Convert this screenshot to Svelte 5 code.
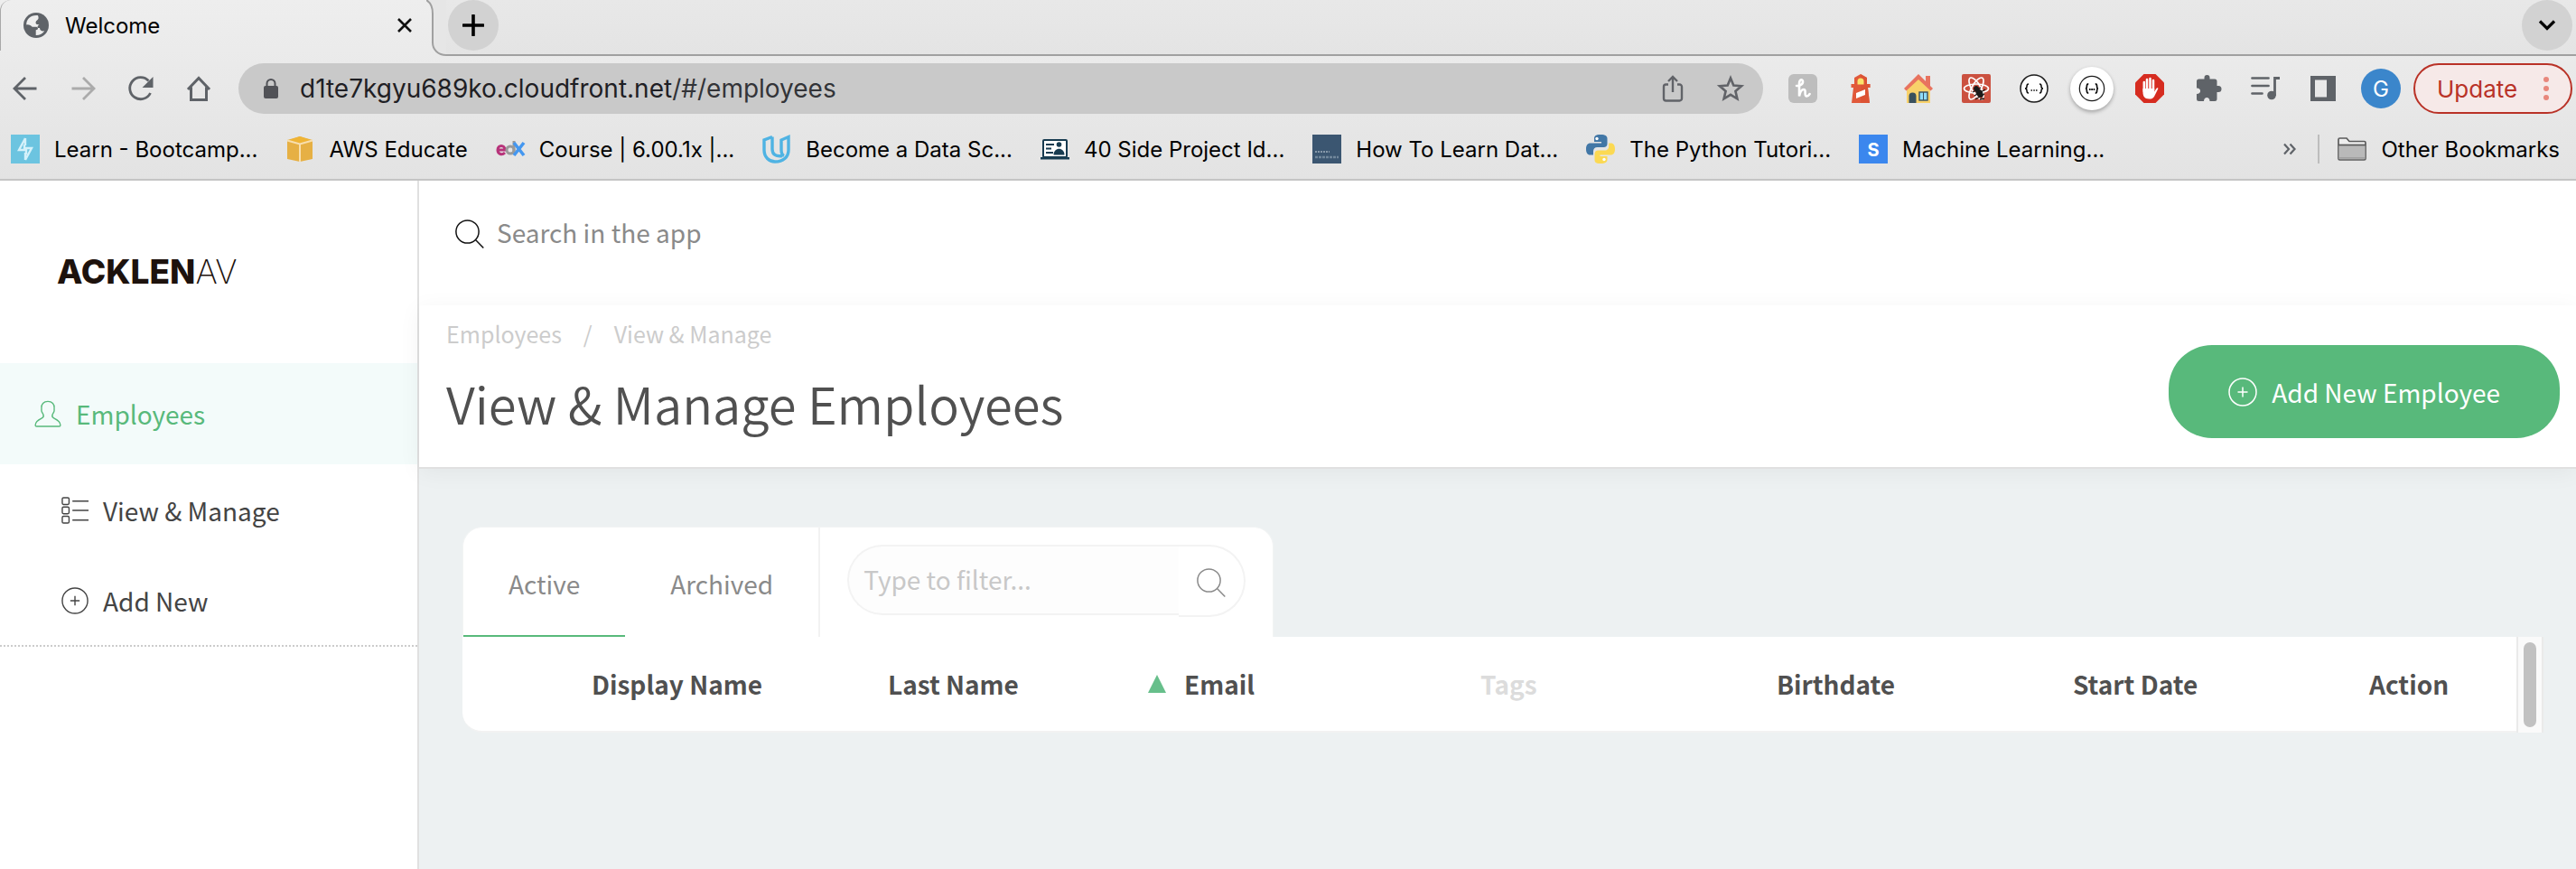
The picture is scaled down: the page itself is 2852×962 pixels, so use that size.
<script>
  const bookmarks = [
    { icon: 'learn', label: 'Learn - Bootcamp...' },
    { icon: 'aws', label: 'AWS Educate' },
    { icon: 'edx', label: 'Course | 6.00.1x |...' },
    { icon: 'udacity', label: 'Become a Data Sc...' },
    { icon: 'project', label: '40 Side Project Id...' },
    { icon: 'data', label: 'How To Learn Dat...' },
    { icon: 'python', label: 'The Python Tutori...' },
    { icon: 'ml', label: 'Machine Learning...' }
  ];
  const columns = [
    { label: 'Display Name' },
    { label: 'Last Name' },
    { label: 'Email', sorted: true },
    { label: 'Tags', muted: true },
    { label: 'Birthdate' },
    { label: 'Start Date' },
    { label: 'Action' }
  ];
  let tab = $state('Active');
</script>

{#snippet plusCircle()}
  <svg class="icon" viewBox="0 0 32 32" aria-hidden="true">
    <circle cx="16" cy="16" r="15" /><path d="M16 10.5v11M10.5 16h11" />
  </svg>
{/snippet}

{#snippet magnifier()}
  <svg class="icon" viewBox="0 0 32 32" aria-hidden="true">
    <circle cx="13.5" cy="13.5" r="12.6" /><path d="M22.5 22.5L31.3 31.5" />
  </svg>
{/snippet}

<div class="page">
  <header class="browser">
    <div class="tabstrip">
      <div class="tab">
        <svg class="globe" viewBox="0 0 28 28" aria-hidden="true">
          <circle cx="14" cy="14" r="14" fill="#5f6368" />
          <path d="M3.200 13.500c2.800-.6 5 .7 6.500 2.300h4.600c1 0 1.700.8 1.700 1.700 0 1.200-1 1.700-2.300 1.700v5.900c4 .2 7.500-1.800 9.500-4.800-2.800.6-5.200-.6-5.200-3.200h-2.600c0-1.800.6-3.100 2.100-3.600-1.600-.5-3.900-.2-3.900-2.200 0-2.700 2.200-2.500 2.900-4.700.3-1.100 0-2.500-.7-3.500C8 2.400 3.200 7 3.200 13.500z" fill="#eee" />
        </svg>
        <span class="tab-title">Welcome</span>
        <button class="bare" aria-label="Close tab">
          <svg width="16" height="16" viewBox="0 0 16 16"><path d="M1 1l14 14M15 1L1 15" stroke="#111" stroke-width="2.600" /></svg>
        </button>
      </div>
      <svg class="tab-edge" viewBox="0 0 22 62" aria-hidden="true">
        <path d="M0 0C5 3 7 8 7 15V47C7 55 13 61 22 61V0z" fill="#e6e6e6" />
        <path d="M0 0C5 3 7 8 7 15V47C7 55 13 61 22 61" fill="none" stroke="#a0a0a0" stroke-width="2" />
      </svg>
      <div class="strip-rest">
        <button class="round" aria-label="New tab">
          <svg width="24" height="24" viewBox="0 0 24 24"><path d="M12 1v22M1 12h22" stroke="#000" stroke-width="3.600" stroke-linecap="round" /></svg>
        </button>
        <button class="round" aria-label="Search tabs">
          <svg width="20" height="14" viewBox="0 0 20 14"><path d="M2 2.500l8 8 8-8" fill="none" stroke="#000" stroke-width="3.200" /></svg>
        </button>
      </div>
    </div>

    <div class="toolbar">
      <nav class="nav-buttons" aria-label="History">
        <button class="bare" aria-label="Back"><svg class="ic" viewBox="0 0 32 32"><path d="M28.500 16H4.500M16 4L4 16l12 12" stroke="#5f6368" stroke-width="2.800" fill="none" /></svg></button>
        <button class="bare" aria-label="Forward"><svg class="ic" viewBox="0 0 32 32"><path d="M3.500 16h24M16 4l12 12-12 12" stroke="#ababab" stroke-width="2.800" fill="none" /></svg></button>
        <button class="bare" aria-label="Reload"><svg class="ic" viewBox="0 0 32 32"><path d="M26.500 21A12 12 0 1 1 24.500 7.500" stroke="#5f6368" stroke-width="2.800" fill="none" /><path d="M29.500 3v12h-12z" fill="#5f6368" /></svg></button>
        <button class="bare" aria-label="Home"><svg class="ic" viewBox="0 0 32 32"><path d="M4 17L16 4.500 28 17M7.500 14.500v14h17v-14" stroke="#5f6368" stroke-width="3" fill="none" /></svg></button>
      </nav>
      <div class="omnibox">
        <svg width="16" height="22" viewBox="0 0 16 22" aria-hidden="true"><rect y="8" width="16" height="14" rx="2" fill="#515257" /><path d="M3.500 9V5.500a4.500 4.500 0 0 1 9 0V9" fill="none" stroke="#515257" stroke-width="2" /></svg>
        <span class="url"><span class="host">d1te7kgyu689ko.cloudfront.net</span>/#/employees</span>
        <button class="bare" aria-label="Share"><svg class="ic" viewBox="0 0 32 32"><path d="M11 11.500H8.500A2.500 2.500 0 0 0 6 14v13a2.500 2.500 0 0 0 2.500 2.500h15A2.500 2.500 0 0 0 26 27V14a2.500 2.500 0 0 0-2.500-2.500H21M16 20V3.500M11 8l5-5 5 5" fill="none" stroke="#616368" stroke-width="2.400" /></svg></button>
        <button class="bare" aria-label="Bookmark this page"><svg class="ic" viewBox="0 0 32 32"><path d="M16 4.500l3.300 8 8.700.7-6.600 5.700 2 8.400-7.400-4.500-7.400 4.500 2-8.400L4 13.200l8.700-.7z" fill="none" stroke="#616368" stroke-width="2.600" /></svg></button>
      </div>
      <div class="extensions">
        <svg class="ic" viewBox="0 0 32 32" aria-hidden="true"><rect width="32" height="32" rx="6" fill="#bdbdbd" /><path d="M9 13c4 .5 7.500-2 7-5s-4-2-4 2.500v14c1.200-5.500 3-7.500 5-7.500 3.200 0 .2 6 2.600 7.300 1.500.7 3-.8 4-2.300" fill="none" stroke="#fff" stroke-width="2.600" stroke-linecap="round" /></svg>
        <svg class="ic" viewBox="0 0 32 32" aria-hidden="true"><path d="M16 0l7 4v7h3.500v4H24l2 17H6l2-17H5.500v-4H9V4z" fill="#e1593a" /><path d="M16 0l7 4v7h3.500v4H24l2 17H16z" fill="#d95030" opacity=".6" /><path d="M12.500 11.500V8a3.500 3.500 0 0 1 7 0v3.500z" fill="#fbe36b" /><path d="M11 21l10-4v6l-10 4z" fill="#fff" /></svg>
        <svg class="ic" viewBox="0 0 32 32" aria-hidden="true"><rect x="24" y="2" width="5" height="12" fill="#e8735f" /><path d="M3 16L16 4l13 12v16H3z" fill="#f8d16a" /><path d="M0 16L16 0l16 16-2.500 2.500L16 6 2.500 18.500z" fill="#e8735f" /><path d="M5.500 32v-7.500a4 4 0 0 1 8 0V32z" fill="#39505c" /><rect x="17" y="20" width="9" height="9" fill="#8fdcf8" stroke="#39505c" stroke-width="1.400" /><path d="M21.500 20v9" stroke="#39505c" /></svg>
        <svg class="ic" viewBox="0 0 32 32" aria-hidden="true"><rect width="32" height="32" rx="2" fill="#cb5140" /><g fill="none" stroke="#fff" stroke-width="1.700"><ellipse cx="16" cy="16" rx="13.500" ry="5" /><ellipse cx="16" cy="16" rx="13.500" ry="5" transform="rotate(60 16 16)" /><ellipse cx="16" cy="16" rx="13.500" ry="5" transform="rotate(120 16 16)" /></g><g fill="#1b1b1b" stroke="#1b1b1b"><circle cx="16" cy="16" r="2.500" /><ellipse cx="19.500" cy="21" rx="3" ry="5" transform="rotate(-35 19.500 21)" /><path d="M14 24l12-7M15 28l10-6M12 20l9-5M20 28l5-1" stroke-width="1.300" /></g></svg>
        <svg class="ic" viewBox="0 0 32 32" aria-hidden="true"><circle cx="16" cy="16" r="15" fill="#fff" stroke="#1c1c1c" stroke-width="1.500" /><path d="M10 11q-2 0-2 2.500T6 16q2 0 2 2.500T10 21M22 11q2 0 2 2.500t2 2.500q-2 0-2 2.500T22 21" fill="none" stroke="#111" stroke-width="1.500" /><path d="M12.500 18h1.500M15.300 18h1.500M18 18h1.500" stroke="#111" stroke-width="1.500" /></svg>
        <span class="badge"><svg class="ic" viewBox="0 0 32 32" aria-hidden="true"><circle cx="16" cy="16" r="14.600" fill="#fff" stroke="#1c1c1c" stroke-width="1.300" /><path d="M12 10.500q-2 0-2 2.700T8.500 16q1.500 0 1.500 2.700t2 2.800M20 10.500q2 0 2 2.700t1.500 2.800q-1.500 0-1.500 2.700t-2 2.800" fill="none" stroke="#111" stroke-width="1.800" /><path d="M12.700 17h1.800M15.200 17H17M17.700 17h1.800" stroke="#111" stroke-width="2" /></svg></span>
        <svg class="ic" viewBox="0 0 32 32" aria-hidden="true"><path d="M9.500 0h13L32 9.500v13L22.500 32h-13L0 22.500v-13z" fill="#d62c20" /><path d="M9.800 9v10M13 6v12M16.500 5v13M20 7V18" stroke="#fff" stroke-width="2.500" stroke-linecap="round" /><path d="M8.500 16h12.700v3.500l2.200-3.500c1-1.300 2.400-.6 1.800.6l-4 7.900C20 27 18 27.500 15.500 27.500 10 27.500 8.500 24 8.500 20z" fill="#fff" /></svg>
        <svg class="ic" viewBox="0 0 32 32" aria-hidden="true"><path d="M12.500 4a3 3 0 0 1 6 0v1.500H24A2.500 2.500 0 0 1 26.500 8v5H28a3.500 3.500 0 0 1 0 7h-1.500v7.500A2.500 2.500 0 0 1 24 30h-5.500c0-5.500-6.500-5.500-6.500 0H6.500A2.500 2.500 0 0 1 4 27.500V22c5.500 0 5.500-6.500 0-6.500V8a2.500 2.500 0 0 1 2.500-2.500h6z" fill="#5f6368" /></svg>
        <svg class="ic" viewBox="0 0 32 32" aria-hidden="true"><path d="M1.500 4.500h18M1.500 13h18M1.500 21.500h11" stroke="#5f6368" stroke-width="2.700" stroke-linecap="round" /><path d="M26.500 24V4.500H32" fill="none" stroke="#5f6368" stroke-width="2.800" /><circle cx="23" cy="23.500" r="4.800" fill="#5f6368" /></svg>
        <svg class="ic" viewBox="0 0 32 32" aria-hidden="true"><path d="M2 2h28v28H2zM7 6.500v19h13v-19z" fill="#5f6368" fill-rule="evenodd" /></svg>
        <button class="avatar" aria-label="Profile">G</button>
      </div>
      <button class="update">Update
        <svg width="6" height="28" viewBox="0 0 6 28" aria-hidden="true"><g fill="#e8877c"><circle cx="3" cy="4" r="3" /><circle cx="3" cy="14" r="3" /><circle cx="3" cy="24" r="3" /></g></svg>
      </button>
    </div>

    <nav class="bookmarks" aria-label="Bookmarks">
      {#each bookmarks as b}
        <a href="#/{b.icon}">
          <svg class="ic" viewBox="0 0 32 32" aria-hidden="true">
            {#if b.icon === 'learn'}
              <rect width="32" height="32" fill="#6cc4e0" /><path d="M16 4l-7 13h6v-6M16 28l7-13h-6v7M16 4v8M16 28v-8" fill="none" stroke="#d4f1fa" stroke-width="2.400" />
            {:else if b.icon === 'aws'}
              <path d="M16 2l14 4v21l-14 3-14-3V6z" fill="#e6b044" /><path d="M16 2l12 4-12 4L4 6z" fill="#efb435" /><path d="M2 6.500l14 4 14-4M16 10v20" fill="none" stroke="#f8dfae" stroke-width="2" />
            {:else if b.icon === 'edx'}
              <g fill="none" stroke-width="3"><path d="M2 17h8c0-6-8-6-8 0 0 5 5 6 8 3" stroke="#b7337a" /><circle cx="16" cy="17" r="4" stroke="#9a9a9a" /><path d="M20 7v15" stroke="#9a9a9a" /><path d="M20 9l11 14M31 9L20 23" stroke="#4497f0" stroke-width="3.600" /></g>
            {:else if b.icon === 'udacity'}
              <path d="M11 2.500L2 6v11c0 8 5.500 13 12 13 9 0 15-5 15-13V2.500l-8 3.500v11c0 3.500 1 5.500 3 6.500M11 2.500V16c0 6 4 8.500 11 7.500" fill="none" stroke="#4fb3e3" stroke-width="3.400" />
            {:else if b.icon === 'project'}
              <rect x="3" y="6" width="26" height="19" rx="1" fill="#fff" stroke="#173b50" stroke-width="2" /><path d="M0 25h32v2.500H0z" fill="#173b50" /><path d="M6 11h9M6 15.500h6M6 20h8" stroke="#173b50" stroke-width="1.800" /><circle cx="20.500" cy="11" r="2.800" fill="#173b50" /><path d="M14.500 22.500c0-9 12-9 12 0z" fill="#173b50" />
            {:else if b.icon === 'data'}
              <rect width="32" height="32" fill="#3b5671" /><path d="M3 19h16" stroke="#8799aa" stroke-width="1.800" stroke-dasharray="2 1" /><path d="M3 25h26" stroke="#71879b" stroke-width="2.400" stroke-dasharray="3 1" />
            {:else if b.icon === 'python'}
              <path d="M16 0c-6 0-7 2-7 4.500V8h8v1.500H5C1.500 9.500 0 12 0 16s1.500 6.500 4.500 6.500H8v-4c0-2.500 1.500-4.500 4.500-4.500h7c2.500 0 4-1.500 4-4V4.500C23.500 2 22 0 16 0z" fill="#4277a6" /><path d="M16 32c6 0 7.500-2 7.500-4.500V24h-8v-1.500H27c3.500 0 5-2.500 5-6.500s-1.500-6.500-4.500-6.500h-2.300V13c0 2.500-1.700 4.500-4.700 4.500h-7c-2.500 0-4 1.500-4 4v6C9.500 30 10 32 16 32z" fill="#fbd953" /><circle cx="12" cy="4.500" r="1.700" fill="#fff" /><circle cx="20" cy="27.500" r="1.700" fill="#fff" />
            {:else}
              <rect width="32" height="32" fill="#3b87ee" /><text x="16" y="23.500" text-anchor="middle" font-family="Inter, sans-serif" font-weight="700" font-size="20" fill="#fff">S</text>
            {/if}
          </svg>
          <span>{b.label}</span>
        </a>
      {/each}
      <button class="bare more" aria-label="More bookmarks"><svg width="14" height="14" viewBox="0 0 14 14"><path d="M1 1.500l5 5.500-5 5.500M7.500 1.500l5 5.500-5 5.500" fill="none" stroke="#5f6368" stroke-width="2.200" /></svg></button>
      <span class="divider"></span>
      <a class="other" href="#/other">
        <svg class="ic" viewBox="0 0 32 32" aria-hidden="true"><path d="M1 25V5.500q0-1.500 1.500-1.500H10l3 3.500h16.500Q31 7.500 31 9v17.500q0 1.500-1.500 1.500h-27Q1 28 1 26.500z" fill="#eee" stroke="#5b5b5b" stroke-width="1.700" /><path d="M1.500 11.500h29V27h-29z" fill="#b9b9b9" /><path d="M1 11.500h30" stroke="#5b5b5b" stroke-width="1.700" /><path d="M2 25.800h28" stroke="#a0a0a0" stroke-width="1.600" /></svg>
        <span>Other Bookmarks</span>
      </a>
    </nav>
  </header>

  <div class="app">
    <aside>
      <div class="logo"><b>ACKLEN</b><span>AV</span></div>
      <nav aria-label="Main">
        <a class="section" href="#/employees">
          <svg class="icon" viewBox="0 0 32 32" aria-hidden="true"><path d="M16 1.500c-5 0-8 3-7.500 8 .2 1.500-.3 2 .1 3.500.4 1.800 1.400 2.500 2 4 .8 2-.1 3.500-2.100 4.500-4 2-7.300 4-7.300 8 0 1 .5 1.500 1.500 1.500h26.600c1 0 1.500-.5 1.500-1.500 0-4-3.300-6-7.300-8-2-1-2.900-2.500-2.100-4.500.6-1.500 1.600-2.200 2-4 .4-1.500-.1-2 .1-3.500.5-5-2.500-8-7.500-8z" /></svg>
          Employees
        </a>
        <a class="sub" href="#/employees/manage">
          <svg class="icon" viewBox="0 0 32 32" aria-hidden="true"><rect x="1" y="1" width="8" height="8" rx="1.500" /><rect x="1" y="12" width="8" height="8" rx="1.500" /><rect x="1" y="23" width="8" height="8" rx="1.500" /><path d="M13 5h19M13 16h19M13 27.500h19" /></svg>
          View &amp; Manage
        </a>
        <a class="sub" href="#/employees/new">{@render plusCircle()} Add New</a>
      </nav>
    </aside>

    <main>
      <label class="search">
        {@render magnifier()}
        <input type="search" placeholder="Search in the app" aria-label="Search in the app" />
      </label>
      <div class="heading">
        <div>
          <nav class="crumbs" aria-label="Breadcrumb"><a href="#/employees">Employees</a><span>/</span><a href="#/employees/manage">View &amp; Manage</a></nav>
          <h1>View &amp; Manage Employees</h1>
        </div>
        <button class="add">{@render plusCircle()} Add New Employee</button>
      </div>

      <section class="list">
        <div class="controls">
          <div class="tabs" role="tablist">
            {#each ['Active', 'Archived'] as name}
              <button role="tab" aria-selected={tab === name} class:selected={tab === name} onclick={() => (tab = name)}>{name}</button>
            {/each}
          </div>
          <form class="filter" onsubmit={(e) => e.preventDefault()}>
            <input type="text" placeholder="Type to filter..." aria-label="Type to filter" />
            <button aria-label="Filter">{@render magnifier()}</button>
          </form>
        </div>
        <div class="table-row">
          <table>
            <thead>
              <tr>
                <td class="pick"></td>
                {#each columns as c}
                  <th scope="col" class:muted={c.muted} class:sorted={c.sorted} class:last={c.label === 'Action'}>{c.label}</th>
                {/each}
              </tr>
            </thead>
          </table>
          <div class="scroll"><div class="thumb"></div></div>
        </div>
      </section>
    </main>
  </div>
</div>

<style>
  :global(body) { margin: 0; background: #edf1f2; }
  * { box-sizing: border-box; }
  .page { min-height: 100vh; display: flex; flex-direction: column; font-family: "Noto Sans CJK SC", "Open Sans", sans-serif; color: #4a4a4a; }
  button, input { font: inherit; color: inherit; }
  a { color: inherit; text-decoration: none; }
  svg { display: block; flex: none; }
  .bare { border: 0; background: none; padding: 0; }
  .ic { width: 32px; height: 32px; overflow: visible; }

  .browser { font-family: Inter, sans-serif; font-size: 24px; color: #000; background: linear-gradient(#eee, #e3e3e3); border-bottom: 2px solid #c4c4c4; }
  .tabstrip { display: flex; height: 62px; }
  .tab { flex: none; width: 472px; height: 56px; padding: 0 16px 0 25px; display: flex; align-items: center; border-left: 1px solid #a8a8a8; border-top-left-radius: 12px; }
  .globe { width: 28px; height: 28px; }
  .tab-title { flex: 1; margin-left: 18px; }
  .tab-edge { width: 22px; height: 62px; }
  .strip-rest { flex: 1; display: flex; justify-content: space-between; padding: 0 4px 0 2px; border-bottom: 2px solid #a0a0a0; background: linear-gradient(#e8e8e8, #e4e4e4); }
  .round { width: 56px; height: 56px; border: 0; border-radius: 50%; padding: 0; background: #d2d2d2; display: grid; place-items: center; }

  .toolbar { display: flex; align-items: center; height: 72px; padding: 0 4px 0 12px; }
  .nav-buttons, .extensions { display: flex; align-items: center; gap: 32px; }
  .omnibox { flex: 1; display: flex; align-items: center; height: 56px; margin: 0 28px; padding: 0 20px 0 28px; border-radius: 28px; background: #c9c9c9; font-size: 28px; color: #333438; }
  .omnibox .bare + .bare { margin-left: 32px; }
  .host { color: #1f2024; }
  .url { flex: 1; margin-left: 24px; }
  .badge { width: 48px; height: 48px; margin: 0 -8px; border-radius: 50%; background: #fff; display: grid; place-items: center; box-shadow: 0 2px 4px rgba(0, 0, 0, 0.3); }
  .badge .ic { width: 30px; height: 30px; }
  .avatar { width: 44px; height: 44px; margin: 0 -6px; padding: 0; border: 0; border-radius: 50%; background: #3b86cb; color: #fff; font-size: 24px; }
  .update { width: 176px; height: 56px; margin-left: 20px; padding: 0 24px; display: flex; align-items: center; justify-content: space-between; border: 2px solid #b93227; border-radius: 28px; background: #f6e9e8; color: #b93227; font-size: 26px; }

  .bookmarks { display: flex; align-items: center; height: 64px; padding: 0 18px 2px 12px; white-space: nowrap; }
  .bookmarks a { display: flex; align-items: center; gap: 16px; margin-right: 31px; }
  .bookmarks .more { margin-left: auto; }
  .divider { width: 2px; height: 32px; margin: 0 20px 0 24px; background: #bdbdbd; }
  .bookmarks .other { margin-right: 0; }

  .app { flex: 1; display: flex; font-size: 28px; line-height: 40px; }
  aside { flex: none; width: 464px; border-right: 2px solid #e0e0e0; background: #fff; }
  .icon { width: 32px; height: 32px; fill: none; stroke: currentColor; stroke-width: 1.5; }
  aside .icon { width: 30px; height: 30px; }
  .logo { height: 202px; width: 262px; padding: 81px 0 0 63px; overflow: hidden; white-space: nowrap; font-family: Inter, sans-serif; font-size: 37px; color: #1d120d; }
  .logo b { font-weight: 800; }
  .logo span { font-weight: 200; }
  aside nav { border-bottom: 2px dotted #ccc; }
  .section, .sub { display: flex; align-items: center; gap: 16px; }
  .section { height: 112px; padding-left: 38px; background: #f3fbfa; color: #58b97b; }
  .sub { height: 100px; padding: 1px 0 0 68px; color: #444; }

  main { flex: 1; min-width: 0; background: #edf1f2; }
  .search { display: flex; align-items: center; gap: 14px; height: 138px; padding: 0 30px 20px 40px; background: #fff; }
  input { border: 0; outline: 0; background: none; padding: 0; min-width: 0; }
  .search .icon { color: #111; }
  .search input { flex: 1; height: 60px; padding-bottom: 4px; }
  .search input::placeholder { color: #8a8a8a; opacity: 1; }
  .heading { display: flex; justify-content: space-between; padding: 11px 18px 0 30px; height: 181px; background: #fff; border-bottom: 2px solid #e0e0e0; box-shadow: 0 4px 24px rgba(0, 0, 0, 0.05); }
  .crumbs { display: flex; gap: 24px; font-size: 25px; color: #ccc; }
  h1 { margin: 15px 0 0; font-size: 56px; line-height: 84px; font-weight: 350; color: #505050; }
  .add { height: 103px; margin-top: 33px; padding: 0 66px; display: flex; align-items: center; gap: 16px; border: 0; border-radius: 48px; background: #58b97b; color: #fff; }

  .list { padding: 64px 36px 40px 48px; }
  .controls { display: flex; width: 898px; height: 122px; background: #fff; border-radius: 22px 22px 0 0; border: 1px solid #f2f4f4; border-bottom: 0; }
  .tabs { display: flex; flex: none; border-right: 2px solid #f2f2f2; }
  .tabs button { border: 0; border-bottom: 2px solid transparent; background: none; padding: 4px 50px 0; color: #8a8a8a; }
  .tabs .selected { border-bottom-color: #58b97b; }
  .filter { flex: 1; display: flex; align-items: flex-start; margin: 19px 30px 0; }
  .filter input { flex: 1; height: 78px; padding: 0 0 2px 16px; border: 2px solid #f3f3f3; border-right: 0; border-radius: 39px 0 0 39px; background: #fdfdfd; }
  .filter input::placeholder { color: #c8c8c8; opacity: 1; }
  .filter button { width: 74px; height: 80px; border: 2px solid #f3f3f3; border-left: 0; border-radius: 0 40px 40px 0; background: none; padding: 4px 20px 0; color: #8a8a8a; }
  .table-row { display: flex; height: 106px; background: #fff; border-bottom: 2px solid #f2f2f2; border-bottom-left-radius: 22px; }
  table { flex: 1; width: 100%; table-layout: fixed; border-collapse: collapse; height: 100%; }
  th, td { padding: 0; text-align: left; }
  th { font-weight: 700; color: #505050; vertical-align: middle; }
  .pick { width: 143px; }
  .last { width: 163px; }
  .muted { color: #dcdcdc; }
  .sorted { position: relative; }
  .sorted::before { content: ""; position: absolute; left: -40px; top: 42px; border: 10px solid transparent; border-top: 0; border-bottom: 20px solid #67bf8b; }
  .scroll { flex: none; width: 30px; height: 106px; padding: 6px; border: 2px solid #eaeaea; border-width: 0 2px; background: #fafafa; display: flex; justify-content: center; }
  .thumb { width: 16px; border-radius: 8px; background: #c1c1c1; }
</style>
